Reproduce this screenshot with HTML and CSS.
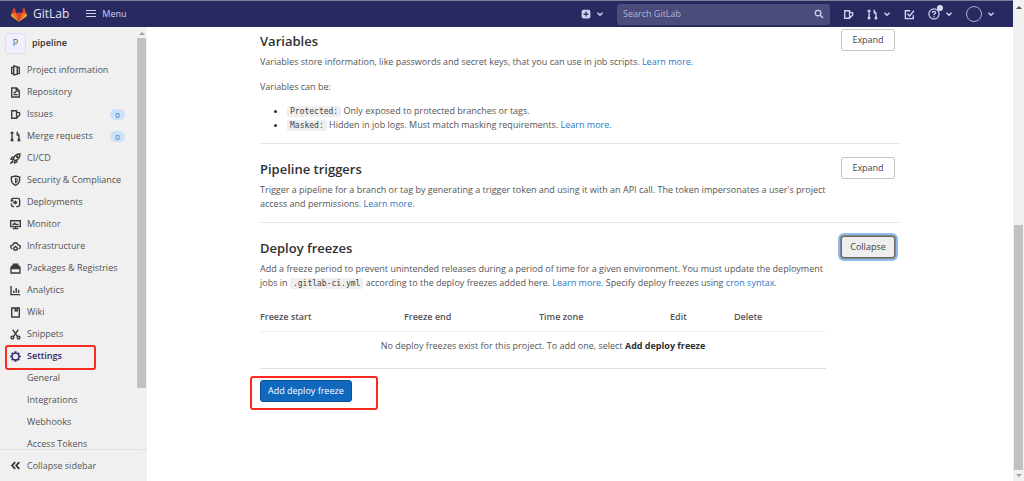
FILE: index.html
```html
<!DOCTYPE html>
<html lang="en">
<head>
<meta charset="utf-8">
<title>CI/CD Settings · pipeline · GitLab</title>
<link rel="stylesheet" href="styles.css">
</head>
<body>
<svg class="sprite" aria-hidden="true">
  <symbol id="chevron" viewBox="0 0 8 8"><path d="M1.500 2.800 4 5.200 6.500 2.800" stroke-width="1.500"/></symbol>
  <symbol id="issues" viewBox="0 0 16 16"><path d="M2.500 2.500h7v11h-7zM9.500 4.500l4.500 1v3.500l-4.500 4"/></symbol>
  <symbol id="merge" viewBox="0 0 16 16"><path d="M3 5v9M13 12V7q0-3-3.500-3M10.500 1v6"/><circle cx="3" cy="3" r="1.200"/><circle cx="3" cy="13" r="1.200"/><circle cx="13" cy="13" r="1.200"/></symbol>
  <symbol id="info" viewBox="0 0 16 16"><path d="M5 3.500H2.500v9H5M5.500 1.500l5 1v11l-5 1zM11 3.500h2.500v9H11"/></symbol>
  <symbol id="doc" viewBox="0 0 16 16"><path d="M2.500 1.500h7l4 4v9h-11zM9 2v4h4M5 8h4M5 11h6"/></symbol>
  <symbol id="rocket" viewBox="0 0 16 16"><path d="M5 9c1-5 4-7.500 9.500-7.500C14.500 7 12 10 7 11zM6 6H3L1.500 9 5 9.500M10 10v3l-3 1.500L6.500 11M4 11l-2.500 3.500L5 13"/><circle cx="10.500" cy="5.500" r="1"/></symbol>
  <symbol id="shield" viewBox="0 0 16 16"><path d="M8 1.500 14 3v4q0 5-6 8-6-3-6-8V3z"/><path d="M8 4.500v7.500M8 5l2.500 1v2Q10 10 8 11.500" stroke-width="1.500"/></symbol>
  <symbol id="deploy" viewBox="0 0 16 16"><path d="M2 7V4.500Q2 2 4.500 2h7Q14 2 14 4.500V11q0 3-3 3H9M2 9.500V11q0 3 3 3h1M5 5H2M7 5.500 9.500 8 7 10.500M4 8h5"/></symbol>
  <symbol id="monitor" viewBox="0 0 16 16"><path d="M1 2.500h14v8.500H1zM4 14h8M8 11v3M3.500 8h2l1-2 2 2h4"/></symbol>
  <symbol id="cloud" viewBox="0 0 16 16"><path d="M3.500 11.500Q1 11 1 8.500 1 6 4 6q1-3.500 4-3.500T12 6q3 0 3 2.500 0 2.500-2.500 3"/><circle cx="8" cy="11" r="2.500"/><path d="M8 7v2M8 11h.1M4.800 13l1-.7M11.200 13l-1-.7"/></symbol>
  <symbol id="package" viewBox="0 0 16 16"><path d="M1.500 6h13v8.500h-13zM2.500 6l1-2h9l1 2M5 4V1.800h6V4M2 8h12"/></symbol>
  <symbol id="chart" viewBox="0 0 16 16"><path d="M1.500 1.500v12.500H15M5.500 8v3.500M9 4.500v7M12.500 7v4.500"/></symbol>
  <symbol id="book" viewBox="0 0 16 16"><path d="M2.500 1.500h11v13h-11zM7.500 2v4.500M10.500 2v4.500M7.500 6l1.500-1 1.500 1"/></symbol>
  <symbol id="scissors" viewBox="0 0 16 16"><path d="M4 1l7 10M12 1 5 11"/><circle cx="3.500" cy="12.500" r="2"/><circle cx="12.500" cy="12.500" r="2"/></symbol>
  <symbol id="gear" viewBox="0 0 16 16"><circle cx="8" cy="8" r="5"/><path d="M8 .5v2.500M8 13v2.500M.5 8H3M13 8h2.500M2.700 2.700l1.300 1.300M12 12l1.300 1.300M13.300 2.700l-1.300 1.300M4 12l-1.300 1.300" stroke-width="3"/></symbol>
  <symbol id="collapse" viewBox="0 0 16 16"><path d="M7.500 3 3 8l4.500 5M13.500 3 9 8l4.500 5" stroke-width="2.500"/></symbol>
  <symbol id="search" viewBox="0 0 16 16"><circle cx="6.500" cy="6.500" r="4.500"/><path d="M10 10l4.500 4.500"/></symbol>
  <symbol id="todo" viewBox="0 0 16 16"><path d="M9 2.500H2v11.500h11.500V9M5 7l3 3 6.500-7.500"/></symbol>
  <symbol id="help" viewBox="0 0 16 16"><circle cx="8" cy="8" r="6.800" stroke-width="1.600"/><path d="M5.800 6.500q0-2 2.200-2t2.200 1.800Q10.200 7.500 8 8.500v1M8 11v1.500" stroke-width="1.600"/></symbol>
  <symbol id="plus" viewBox="0 0 16 16"><path d="M4 1h8q3 0 3 3v8q0 3-3 3H4q-3 0-3-3V4q0-3 3-3zM7 4v3H4v2h3v3h2V9h3V7H9V4z" fill="currentColor" stroke="none" fill-rule="evenodd"/></symbol>
  <symbol id="menu" viewBox="0 0 10 10"><path d="M0 1.500h10M0 4.500h10M0 7.500h10" stroke-width="1.200"/></symbol>
</svg>

<div class="window">
  <div class="app">
    <header class="topbar">
      <a class="brand" href="#">
        <svg class="logo" viewBox="0 0 36 34" aria-hidden="true">
          <path fill="#e24329" d="M18 34 24.600 13H11.400z"/>
          <path fill="#fc6d26" d="M18 34 11.400 13H2zM18 34l6.600-21H34z"/>
          <path fill="#fca326" d="M2 13 0 19.500q-.2 1 .6 1.600L18 34zM34 13l2 6.500q.2 1-.6 1.600L18 34z"/>
          <path fill="#e24329" d="M2 13h9.400L7.500.8q-.5-1-1 0zM34 13h-9.400L28.500.8q.5-1 1 0z"/>
        </svg>
        GitLab
      </a>
      <button class="menu" type="button"><svg class="icon-sm"><use href="#menu"/></svg>Menu</button>
      <div class="tools">
        <button class="tool" type="button" aria-label="Create new"><svg class="icon-sm"><use href="#plus"/></svg><svg class="caret"><use href="#chevron"/></svg></button>
        <form class="search" role="search">
          <input type="search" placeholder="Search GitLab" aria-label="Search GitLab">
          <svg class="icon-sm"><use href="#search"/></svg>
        </form>
        <a class="tool" href="#" aria-label="Issues"><svg class="icon"><use href="#issues"/></svg></a>
        <button class="tool" type="button" aria-label="Merge requests"><svg class="icon"><use href="#merge"/></svg><svg class="caret"><use href="#chevron"/></svg></button>
        <a class="tool" href="#" aria-label="To-Do List"><svg class="icon"><use href="#todo"/></svg></a>
        <button class="tool help" type="button" aria-label="Help"><svg class="icon-lg"><use href="#help"/></svg><span class="dot"></span><svg class="caret"><use href="#chevron"/></svg></button>
        <button class="tool" type="button" aria-label="Account"><span class="avatar"></span><svg class="caret"><use href="#chevron"/></svg></button>
      </div>
    </header>

    <div class="body">
      <aside class="sidebar">
        <div class="side-scroll">
          <nav class="nav" aria-label="Project">
            <a class="project" href="#"><span class="letter">P</span>pipeline</a>
            <a class="item" href="#"><svg class="icon"><use href="#info"/></svg>Project information</a>
            <a class="item" href="#"><svg class="icon"><use href="#doc"/></svg>Repository</a>
            <a class="item" href="#"><svg class="icon"><use href="#issues"/></svg>Issues<span class="count">0</span></a>
            <a class="item" href="#"><svg class="icon"><use href="#merge"/></svg>Merge requests<span class="count">0</span></a>
            <a class="item" href="#"><svg class="icon"><use href="#rocket"/></svg>CI/CD</a>
            <a class="item" href="#"><svg class="icon"><use href="#shield"/></svg>Security &amp; Compliance</a>
            <a class="item" href="#"><svg class="icon"><use href="#deploy"/></svg>Deployments</a>
            <a class="item" href="#"><svg class="icon"><use href="#monitor"/></svg>Monitor</a>
            <a class="item" href="#"><svg class="icon"><use href="#cloud"/></svg>Infrastructure</a>
            <a class="item" href="#"><svg class="icon"><use href="#package"/></svg>Packages &amp; Registries</a>
            <a class="item" href="#"><svg class="icon"><use href="#chart"/></svg>Analytics</a>
            <a class="item" href="#"><svg class="icon"><use href="#book"/></svg>Wiki</a>
            <a class="item" href="#"><svg class="icon"><use href="#scissors"/></svg>Snippets</a>
            <a class="item active" href="#"><svg class="icon"><use href="#gear"/></svg>Settings<span class="mark"></span></a>
            <a class="item sub" href="#">General</a>
            <a class="item sub" href="#">Integrations</a>
            <a class="item sub" href="#">Webhooks</a>
            <a class="item sub" href="#">Access Tokens</a>
          </nav>
          <div class="scrollbar side-bar"><span class="arrow up"></span><span class="thumb"></span></div>
        </div>
        <button class="collapse" type="button"><svg class="icon"><use href="#collapse"/></svg>Collapse sidebar</button>
      </aside>

      <main class="main">
        <div class="content">
          <section class="section">
            <div class="head"><h2>Variables</h2><button class="btn" type="button">Expand</button></div>
            <div class="text">
              <p>Variables store information, like passwords and secret keys, that you can use in job scripts. <a href="#">Learn more.</a></p>
              <p class="spaced">Variables can be:</p>
              <ul>
                <li><code>Protected:</code> Only exposed to protected branches or tags.</li>
                <li><code>Masked:</code> Hidden in job logs. Must match masking requirements. <a href="#">Learn more.</a></li>
              </ul>
            </div>
          </section>
          <section class="section">
            <div class="head"><h2>Pipeline triggers</h2><button class="btn" type="button">Expand</button></div>
            <div class="text">
              <p>Trigger a pipeline for a branch or tag by generating a trigger token and using it with an API call. The token impersonates a user's project access and permissions. <a href="#">Learn more.</a></p>
            </div>
          </section>
          <section class="section">
            <div class="head"><h2>Deploy freezes</h2><button class="btn focused" type="button">Collapse</button></div>
            <div class="text">
              <p>Add a freeze period to prevent unintended releases during a period of time for a given environment. You must update the deployment jobs in <code>.gitlab-ci.yml</code> according to the deploy freezes added here. <a href="#">Learn more.</a> Specify deploy freezes using <a href="#">cron syntax</a>.</p>
              <table>
                <colgroup><col class="c-start"><col class="c-end"><col class="c-zone"><col class="c-edit"><col></colgroup>
                <thead><tr><th>Freeze start</th><th>Freeze end</th><th>Time zone</th><th>Edit</th><th>Delete</th></tr></thead>
                <tbody><tr><td colspan="5">No deploy freezes exist for this project. To add one, select <strong>Add deploy freeze</strong></td></tr></tbody>
              </table>
              <div class="add"><button class="btn primary" type="button">Add deploy freeze</button><span class="mark"></span></div>
            </div>
          </section>
        </div>
      </main>
    </div>
  </div>
  <div class="scrollbar page-bar"><span class="arrow up dark"></span><span class="thumb"></span><span class="arrow down"></span></div>
</div>
</body>
</html>
```

FILE: styles.css
```css
* { box-sizing: border-box; }

body {
  margin: 0;
  background: #fff;
  color: #555;
  font: 9px/14px "Open Sans", "Noto Sans", sans-serif;
}

a { color: #2878c8; text-decoration: none; }
button, input { font: inherit; color: inherit; }
button { background: none; border: 0; padding: 0; margin: 0; }
h2, p, ul { margin: 0; }

svg { flex: none; fill: none; stroke: currentColor; stroke-width: 2; }
.sprite { position: absolute; width: 0; height: 0; }
.icon { width: 11px; height: 11px; }
.icon-sm { width: 10px; height: 10px; }
.icon-lg { width: 12px; height: 12px; }
.caret { width: 8px; height: 8px; }

.window { display: flex; height: 100vh; overflow: hidden; }
.app { flex: 1; min-width: 0; display: flex; flex-direction: column; }

/* Top bar */
.topbar {
  flex: none;
  display: flex;
  align-items: center;
  height: 27px;
  padding: 0 18px 0 11px;
  background: #292961;
  border-top: 1px solid #7f7f95;
  color: #d1d1f0;
}
.brand { display: flex; align-items: center; gap: 6px; color: #e4e4f6; font-size: 12px; }
.logo { width: 16px; height: 15px; stroke: none; }
.menu { display: flex; align-items: center; gap: 6px; margin-left: 17px; font-weight: 500; }
.tools { display: flex; align-items: center; gap: 13px; margin-left: auto; }
.tool { position: relative; display: flex; align-items: center; gap: 5px; color: #d1d1f0; }
.search {
  display: flex;
  align-items: center;
  width: 213px;
  height: 21px;
  padding: 0 6px;
  border-radius: 3px;
  background: #4b4b7c;
}
.search input { flex: 1; min-width: 0; padding: 0; border: 0; background: none; outline: 0; }
.search input::placeholder { color: #b4b4d4; opacity: 1; }
.dot { position: absolute; top: -3px; left: 9px; width: 6px; height: 6px; border-radius: 50%; background: #dcdcf4; }
.avatar { width: 16px; height: 16px; border: 1px solid #b0b0d0; border-radius: 50%; }

/* Sidebar */
.body { flex: 1; min-height: 0; display: flex; }
.sidebar { flex: none; display: flex; flex-direction: column; width: 147px; background: #f0f0f0; }
.side-scroll { flex: 1; min-height: 0; display: flex; overflow: hidden; }
.nav { flex: 1; padding-top: 5px; }
.project {
  display: flex;
  align-items: center;
  gap: 6px;
  height: 22px;
  margin: 0 0 5px 5px;
  color: #333;
  font-weight: 600;
  font-size: 9px;
}
.letter {
  display: grid;
  place-items: center;
  width: 21px;
  height: 21px;
  border: 1px solid #dcdcee;
  border-radius: 3px;
  background: #f0f0ff;
  color: #555;
  font-weight: 400;
}
.item { position: relative; display: flex; align-items: center; gap: 6px; height: 22px; padding: 0 11px 0 10px; color: #525252; }
.item .icon { color: #3a3a3a; }
.item.sub { padding-left: 27px; }
.item.active, .item.active .icon { color: #2f2a6b; }
.item.active { font-weight: 600; }
.count { width: 15px; margin-left: auto; border-radius: 6px; background: #cbe2f9; color: #2f69a8; line-height: 11px; text-align: center; font-size: 8px; }
.collapse { flex: none; display: flex; align-items: center; gap: 6px; height: 32px; padding-left: 10px; border-top: 1px solid #dfdfdf; }
.collapse .icon { color: #303030; }

/* Red outline drawn over the highlighted control */
.mark { position: absolute; border: 2px solid #fb2a20; border-radius: 3px; pointer-events: none; }
.item .mark { inset: 0 40px -3px 5px; }
.add .mark { inset: -4px -26px -8px -10px; }

/* Scroll bars */
.scrollbar { flex: none; display: flex; flex-direction: column; align-items: center; width: 11px; background: #f1f1f1; }
.thumb { width: 9px; background: #c1c1c1; }
.arrow { border: 3px solid transparent; }
.arrow.up { border-top: 0; border-bottom-color: #a0a0a0; }
.arrow.up.dark { border-bottom-color: #505050; }
.arrow.down { border-bottom: 0; border-top-color: #a0a0a0; }
.side-bar { padding-top: 5px; }
.side-bar .thumb { height: 84%; margin-top: 3px; }
.page-bar { justify-content: space-between; padding: 6px 0 4px; }
.page-bar .thumb { height: 52%; margin: auto 0 4px; }

/* Settings content */
.main { flex: 1; min-width: 0; overflow: hidden; }
.content { max-width: 640px; margin: 0 auto; }
.section { padding: 13px 0 11px; }
.section:first-child { padding-top: 2px; }
.section + .section { border-top: 1px solid #e4e4e4; }
.head { display: flex; align-items: flex-start; justify-content: space-between; padding-right: 5px; }
h2 { color: #303030; font-size: 13px; line-height: 24px; font-weight: 600; }
.text { max-width: 566px; padding-top: 2px; }
.spaced { margin: 11px 0 10px; }
ul { padding-left: 27px; }
li::marker { color: #303030; }
code { padding: 1px 3px; border-radius: 2px; background: #efefef; color: #444; font: 8px/10px "DejaVu Sans Mono", monospace; }

.btn {
  display: inline-block;
  width: 54px;
  height: 22px;
  border: 1px solid #c4c4c4;
  border-radius: 3px;
  background: #fff;
  color: #444;
  line-height: 20px;
}
.btn.focused { border-color: #666; background: #eee; box-shadow: 0 0 0 1px #888, 0 0 0 3px #8fbcec; }
.btn.primary { width: auto; padding: 0 7px; border-color: #0b5099; background: #1068bf; color: #fff; }

table { width: 100%; margin-top: 17px; border-collapse: collapse; table-layout: fixed; }
.c-start { width: 144px; }
.c-end { width: 135px; }
.c-zone { width: 131px; }
.c-edit { width: 64px; }
th { padding: 3px 0 7px; text-align: left; font-weight: 600; }
td { padding: 7px 0 15px; border-top: 1px solid #eee; border-bottom: 1px solid #e0e0e0; text-align: center; }
td strong { color: #303030; font-weight: 700; }
.add { position: relative; width: fit-content; margin-top: 11px; }
.add .btn { display: block; }
```
